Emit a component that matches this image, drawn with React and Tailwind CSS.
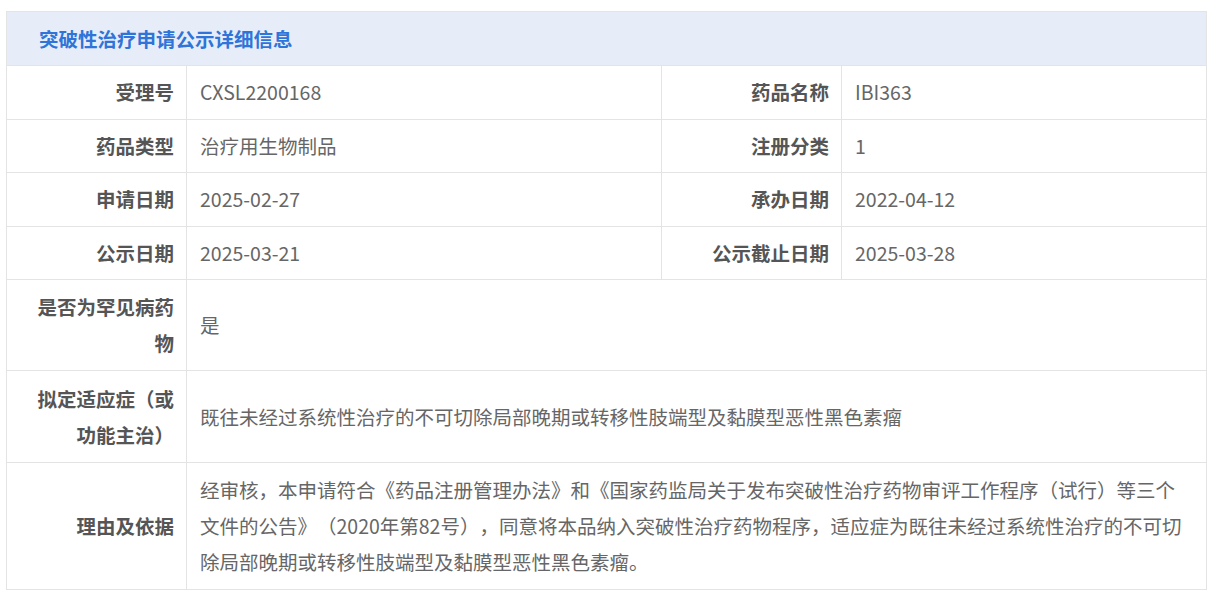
const ROWS = [
  [
    ['受理号', 'CXSL2200168'],
    ['药品名称', 'IBI363'],
  ],
  [
    ['药品类型', '治疗用生物制品'],
    ['注册分类', '1'],
  ],
  [
    ['申请日期', '2025-02-27'],
    ['承办日期', '2022-04-12'],
  ],
  [
    ['公示日期', '2025-03-21'],
    ['公示截止日期', '2025-03-28'],
  ],
]

const WIDE_ROWS = [
  ['是否为罕见病药物', '是', 'py-[9px]'],
  ['拟定适应症（或功能主治）', '既往未经过系统性治疗的不可切除局部晚期或转移性肢端型及黏膜型恶性黑色素瘤', 'py-[9.5px]'],
  [
    '理由及依据',
    '经审核，本申请符合《药品注册管理办法》和《国家药监局关于发布突破性治疗药物审评工作程序（试行）等三个文件的公告》（2020年第82号），同意将本品纳入突破性治疗药物程序，适应症为既往未经过系统性治疗的不可切除局部晚期或转移性肢端型及黏膜型恶性黑色素瘤。',
    'py-[9px]',
  ],
]

const labelBase =
  'border border-[#e4e4e4] pl-6 pr-3 text-right align-middle font-bold text-[#555555] leading-[36px]'
const valueBase =
  'border border-[#e4e4e4] pl-[13px] pr-6 text-left align-middle text-[#666666] leading-[36px]'

export default function App() {
  return (
    <div
      className="min-h-screen bg-white pt-[11px] pl-[6px] [text-spacing-trim:space-all]"
      style={{ fontFamily: '"Noto Sans CJK SC", "Noto Sans", sans-serif' }}
    >
      <table className="w-[1200px] table-fixed border-collapse text-[19.5px]">
        <colgroup>
          <col className="w-[180px]" />
          <col className="w-[475px]" />
          <col className="w-[180px]" />
          <col className="w-[365px]" />
        </colgroup>
        <thead>
          <tr>
            <th
              colSpan={4}
              className="h-[54px] border border-[#e4e4e4] bg-[#e6edf8] pl-8 text-left align-middle font-bold text-[#2f74d8]"
            >
              突破性治疗申请公示详细信息
            </th>
          </tr>
        </thead>
        <tbody>
          {ROWS.map((row, i) => (
            <tr key={i} className="h-[53.5px]">
              {row.map(([label, value]) => [
                <td key={label} className={labelBase + ' py-0'}>{label}</td>,
                <td key={label + '-v'} className={valueBase + ' py-0'}>{value}</td>,
              ])}
            </tr>
          ))}
          {WIDE_ROWS.map(([label, value, pad]) => (
            <tr key={label}>
              <td className={labelBase + ' ' + pad}>{label}</td>
              <td colSpan={3} className={valueBase + ' ' + pad}>{value}</td>
            </tr>
          ))}
        </tbody>
      </table>
    </div>
  )
}
